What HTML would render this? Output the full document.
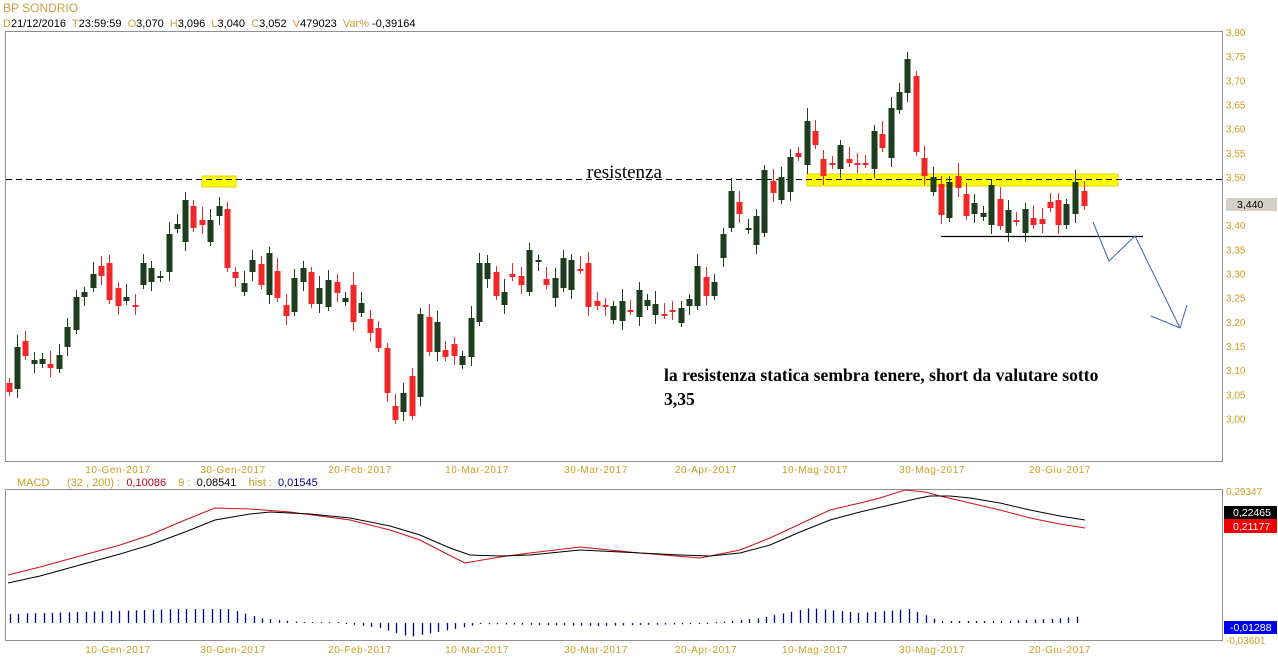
<!DOCTYPE html>
<html><head><meta charset="utf-8"><style>
html,body{margin:0;padding:0;background:#fff;width:1278px;height:668px;overflow:hidden}
svg{display:block}
text{white-space:pre}
</style></head><body>
<svg id="s" width="1278" height="668" xmlns="http://www.w3.org/2000/svg" font-family="Liberation Sans, sans-serif" xml:space="preserve">
<rect width="1278" height="668" fill="#fff"/>
<text x="3" y="12" font-size="12" fill="#c8a040">BP SONDRIO</text>
<text x="3" y="27" font-size="11" fill="#000"><tspan fill="#c8a040">D</tspan>21/12/2016  <tspan fill="#c8a040">T</tspan>23:59:59  <tspan fill="#c8a040">O</tspan>3,070  <tspan fill="#c8a040">H</tspan>3,096  <tspan fill="#c8a040">L</tspan>3,040  <tspan fill="#c8a040">C</tspan>3,052  <tspan fill="#c8a040">V</tspan>479023  <tspan fill="#c8a040">Var%</tspan> -0,39164</text>
<rect x="5.5" y="31.5" width="1217" height="430" fill="none" stroke="#909090"/>
<rect x="5.5" y="489.5" width="1217" height="151" fill="none" stroke="#909090"/>
<rect x="202" y="176" width="34" height="11" fill="#ffff00" stroke="#e0d000"/>
<rect x="807" y="174" width="311" height="12" fill="#ffff00" stroke="#e0d000"/>
<line x1="6" y1="179.5" x2="1222" y2="179.5" stroke="#000" stroke-dasharray="6,4"/>
<g id="c"></g>
<g id="h"></g>
<text x="587" y="178" font-family="Liberation Serif, serif" font-size="19" fill="#000">resistenza</text>
<line x1="941" y1="236.5" x2="1143" y2="236.5" stroke="#000" stroke-width="1.2"/>
<polyline points="1093,222 1109,261 1135,236 1180,328" fill="none" stroke="#4060b0" stroke-width="1"/>
<polyline points="1187,305 1180,328 1151,316" fill="none" stroke="#4060b0" stroke-width="1"/>
<text x="664" y="381" font-family="Liberation Serif, serif" font-weight="bold" font-size="17.6" fill="#000">la resistenza statica sembra tenere, short da valutare sotto</text>
<text x="664" y="405" font-family="Liberation Serif, serif" font-weight="bold" font-size="17.6" fill="#000">3,35</text>
<g font-size="10" fill="#c8a020" id="ax"></g>
<rect x="1226" y="198" width="51" height="13" fill="#d4d0c8"/>
<text x="1237" y="208" font-size="10.5" fill="#000">3,440</text>
<text x="17" y="486" font-size="11" fill="#c8a020">MACD</text>
<text x="67" y="486" font-size="11" fill="#c8a020">(32 , 200) :  <tspan fill="#c00020">0,10086</tspan>    9 :  <tspan fill="#000">0,08541</tspan>    hist :  <tspan fill="#000080">0,01545</tspan></text>
<polyline fill="none" stroke="#d01010" stroke-width="1" points="8,575 40,567 80,556 120,545 150,535 185,520 215,508 250,509 290,512 350,520 390,530 420,540 445,553 465,563 500,557 530,553 580,547 640,553 700,558 740,550 770,538 800,524 830,510 860,503 880,498 905,490 925,492 940,496 970,503 1000,510 1030,518 1060,524 1085,528"/>
<polyline fill="none" stroke="#000" stroke-width="1" points="8,583 40,576 80,565 120,554 150,545 185,532 215,520 250,514 270,512 310,514 350,518 390,526 420,535 450,548 470,555 500,556 530,555 580,550 640,553 680,555 710,556 740,553 770,545 800,532 830,520 860,512 890,505 915,499 930,496 950,496 970,498 1000,503 1030,510 1060,516 1085,520"/>
<text x="1226" y="495" font-size="10" fill="#c8a020">0,29347</text>
<rect x="1224" y="506" width="53" height="13" fill="#000"/><text x="1233" y="516" font-size="10.5" fill="#fff">0,22465</text>
<rect x="1224" y="519" width="53" height="14" fill="#f00000"/><text x="1233" y="530" font-size="10.5" fill="#fff">0,21177</text>
<rect x="1224" y="621" width="53" height="13" fill="#0000f0"/><text x="1230" y="631" font-size="10.5" fill="#fff">-0,01288</text>
<text x="1226" y="644" font-size="10" fill="#c8a020">-0,03601</text>
</svg>
<script>
var ns="http://www.w3.org/2000/svg";
function el(p,t,a,txt){var e=document.createElementNS(ns,t);for(var k in a)e.setAttribute(k,a[k]);if(txt)e.textContent=txt;p.appendChild(e);return e;}
var d="9,383,392,r;17,347,389,g;25,341,356,r;34,360,364,g;42,359,364,g;50,364,368,r;59,355,369,g;67,327,347,g;76,297,330,g;84,292,297,g;93,274,288,g;101,266,276,r;109,263,300,r;118,288,306,r;126,297,301,g;135,305,306,r;143,263,285,g;151,268,282,g;160,276,278,g;169,234,272,g;177,224,229,g;185,200,242,g;193,206,228,r;202,220,225,r;210,220,242,g;219,206,216,g;227,209,268,r;235,272,278,r;244,283,292,g;252,260,272,g;261,264,285,r;269,253,295,g;277,271,298,r;286,305,316,r;294,278,312,g;303,268,282,g;311,272,304,r;319,288,304,g;328,280,307,g;337,282,293,r;345,298,302,g;353,285,322,r;361,303,313,g;370,319,333,r;378,328,348,r;387,348,393,r;395,406,420,r;403,393,412,g;412,376,416,r;420,314,397,g;429,317,352,r;437,322,352,g;445,350,357,r;454,344,356,r;462,356,365,g;471,318,357,g;479,263,322,g;487,263,279,g;496,272,296,r;504,292,305,g;512,274,277,r;521,276,285,r;529,250,292,g;538,260,262,g;546,279,285,r;555,278,298,g;563,258,288,g;571,260,290,g;580,269,270,r;588,263,307,r;597,301,306,r;605,305,307,r;613,306,320,g;622,301,321,g;630,310,311,r;639,290,317,g;647,300,306,g;655,304,315,g;664,314,315,r;672,310,311,r;681,308,323,g;689,299,306,g;697,266,306,g;706,277,296,r;714,282,296,g;723,234,258,g;731,191,228,g;739,202,214,r;748,228,230,g;756,216,245,g;764,170,233,g;773,181,193,r;781,177,200,g;790,157,192,g;798,153,157,r;807,121,165,g;815,131,145,r;823,159,176,r;832,163,165,r;840,145,169,g;849,159,163,r;857,163,164,r;865,163,164,r;874,131,169,g;882,134,148,r;891,108,158,g;899,92,110,g;907,59,93,g;916,76,152,r;924,158,176,r;933,177,192,g;941,184,215,r;949,182,218,g;958,176,188,r;966,194,216,r;974,203,214,g;983,213,217,g;991,185,225,g;1000,199,226,r;1008,210,233,g;1016,220,222,r;1025,209,233,g;1033,218,225,r;1042,219,224,r;1050,202,208,r;1058,200,225,r;1066,204,225,g;1075,182,214,g;1084,191,206,r";
var g=document.getElementById("c");
d.split(";").forEach(function(s,i){var a=s.split(","),x=+a[0],t=+a[1],b=+a[2],c=a[3]=="g"?"#1e3d1e":"#f02828";
var wt=t-5-((i*7)%9),wb=b+4+((i*5)%10);
el(g,"line",{x1:x+.5,y1:wt,x2:x+.5,y2:wb,stroke:c,"stroke-width":1});
el(g,"rect",{x:x-2.5,y:t,width:6,height:Math.max(b-t,2),fill:c});});
var h=document.getElementById("h");
var kp=[[8,9],[180,14],[230,14],[260,5],[300,1],[340,0],[380,-5],[410,-14],[460,-5],[480,-1],[600,-3],[640,-2],[700,-1],[760,5],[810,15],[860,10],[910,14],[940,2],[1000,2],[1050,4],[1085,7]];
function f(x){for(var i=1;i<kp.length;i++)if(x<=kp[i][0]){var a=kp[i-1],b=kp[i];return a[1]+(b[1]-a[1])*(x-a[0])/(b[0]-a[0]);}return 7;}
for(var x=10;x<=1085;x+=8.4){var v=f(x),y0=623,len=Math.max(Math.abs(v),1);
el(h,"line",{x1:Math.round(x)+.5,y1:v>=0?y0-len:y0,x2:Math.round(x)+.5,y2:v>=0?y0:y0+len,stroke:"#000080","stroke-width":1.3});}
var ax=document.getElementById("ax");
var ps=["3,80","3,75","3,70","3,65","3,60","3,55","3,50","3,45","3,40","3,35","3,30","3,25","3,20","3,15","3,10","3,05","3,00"];
ps.forEach(function(p,i){if(i==7)return;el(ax,"text",{x:1226,y:36+i*24.15},p);});
var dl=[["10-Gen-2017",118],["30-Gen-2017",233],["20-Feb-2017",360],["10-Mar-2017",477],["30-Mar-2017",596],["20-Apr-2017",706],["10-Mag-2017",815],["30-Mag-2017",932],["20-Giu-2017",1060]];
dl.forEach(function(q){el(ax,"text",{x:q[1],y:473,"text-anchor":"middle","letter-spacing":"0.6"},q[0]);el(ax,"text",{x:q[1],y:653,"text-anchor":"middle","letter-spacing":"0.6"},q[0]);});
</script>
</body></html>
